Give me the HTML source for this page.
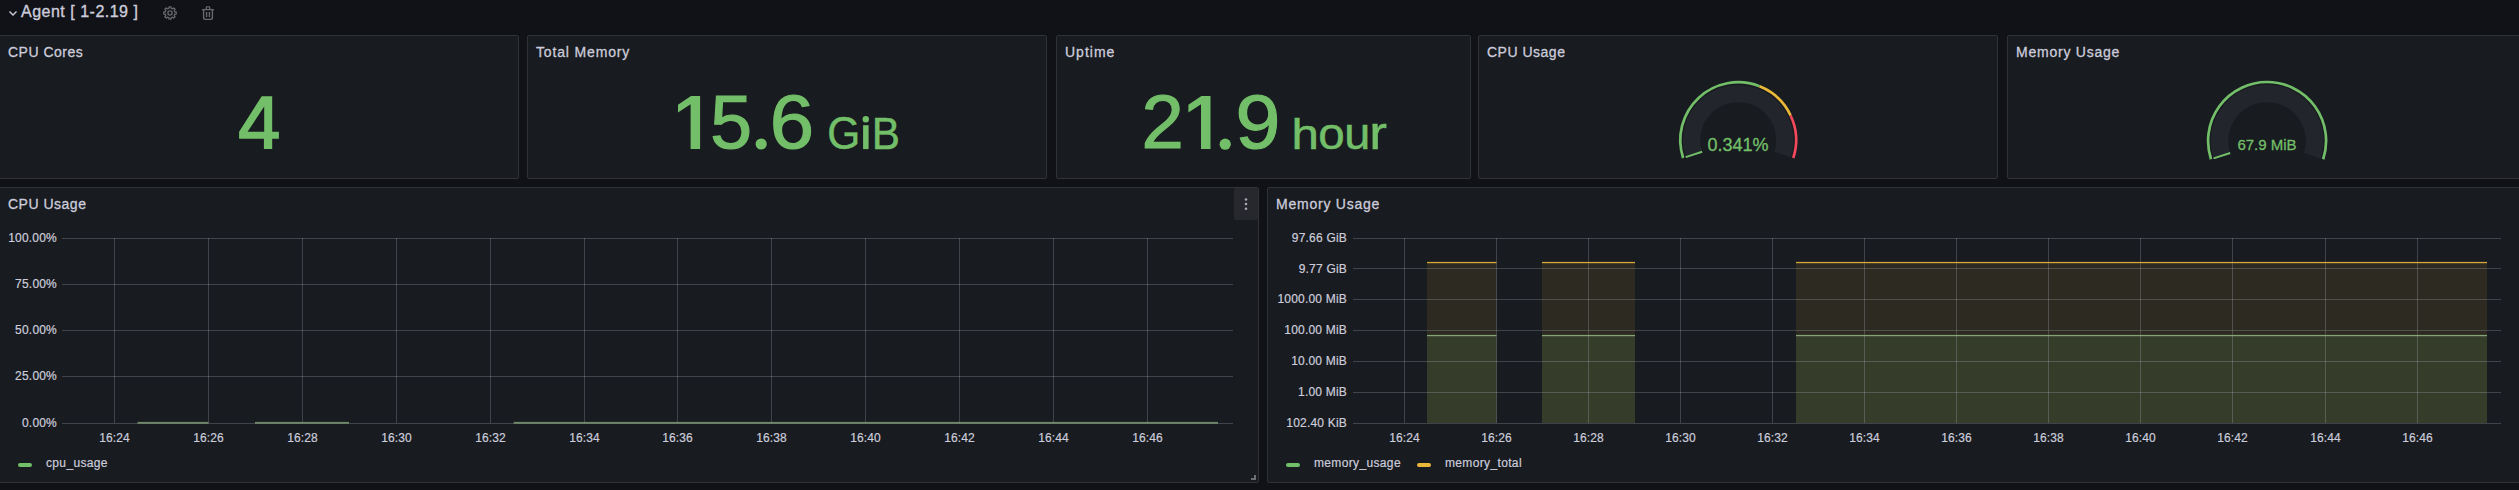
<!DOCTYPE html>
<html><head><meta charset="utf-8">
<style>
*{margin:0;padding:0;box-sizing:border-box}
html,body{width:2519px;height:490px;overflow:hidden;background:#111217;font-family:"Liberation Sans",sans-serif;color:#ccccdc}
.abs{position:absolute}
.panel{position:absolute;background:#181b1f;border:1px solid #303237;border-radius:2px}
.title{position:absolute;font-size:14px;line-height:14px;white-space:nowrap;color:#ccccdc;letter-spacing:0.5px;-webkit-text-stroke:0.3px #ccccdc}
.g{position:absolute;color:#73bf69;white-space:pre;transform-origin:0 0;-webkit-text-stroke:1.2px #73bf69}
.yl{position:absolute;font-size:12px;line-height:15px;text-align:right;white-space:nowrap;color:#ccccdc;letter-spacing:0.2px;-webkit-text-stroke:0.2px #ccccdc}
.xl{position:absolute;font-size:12px;line-height:15px;width:60px;text-align:center;white-space:nowrap;color:#ccccdc;letter-spacing:0.1px;-webkit-text-stroke:0.2px #ccccdc}
.leg{position:absolute;font-size:12px;line-height:15px;white-space:nowrap;color:#ccccdc;letter-spacing:0.35px;-webkit-text-stroke:0.2px #ccccdc}
.sw{position:absolute;width:14px;height:4px;border-radius:2px}
svg{position:absolute;left:0;top:0}
text{font-family:"Liberation Sans",sans-serif}
</style></head>
<body>
<div class="panel" style="left:-1px;top:35px;width:520px;height:144px"></div>
<div class="panel" style="left:527px;top:35px;width:520px;height:144px"></div>
<div class="panel" style="left:1056px;top:35px;width:415px;height:144px"></div>
<div class="panel" style="left:1478px;top:35px;width:520px;height:144px"></div>
<div class="panel" style="left:2007px;top:35px;width:520px;height:144px"></div>
<div class="panel" style="left:-1px;top:187px;width:1260px;height:296px"></div>
<div class="panel" style="left:1267px;top:187px;width:1260px;height:296px"></div>

<svg width="2519" height="490" viewBox="0 0 2519 490">
<path d="M9.5 11.5 L13 15 L16.5 11.5" fill="none" stroke="#ccccdc" stroke-width="1.4"/>
<path d="M700.1 96 L691 96 L678 104.8 L678 112.5 L690.6 104.3 L690.6 149 L700.1 149 Z" fill="#73bf69"/><path d="M1210.5 96 L1201.4 96 L1188.4 104.8 L1188.4 112.5 L1201.0 104.3 L1201.0 149 L1210.5 149 Z" fill="#73bf69"/><path d="M261.7 96.2 L272.2 96.2 L272.2 131.7 L278.9 131.7 L278.9 138.7 L272.2 138.7 L272.2 149.1 L263.9 149.1 L263.9 138.7 L239.1 138.7 L239.1 131.7 Z M247.6 131.7 L264.2 131.7 L264.2 106.4 Z" fill="#73bf69" fill-rule="evenodd"/><circle cx="761.15" cy="144" r="5.6" fill="#73bf69"/><circle cx="1225.2" cy="144.2" r="5.6" fill="#73bf69"/><circle cx="865.8" cy="119.3" r="3.2" fill="#73bf69"/><rect x="863.1" y="125.2" width="5.5" height="23.9" fill="#73bf69"/>
<text transform="translate(710.29 148.35) scale(0.9985 1)" font-size="75.27" fill="#73bf69" stroke="#73bf69" stroke-width="1.2">5</text>
<text transform="translate(769.82 148.35) scale(1.0582 1)" font-size="75.19" fill="#73bf69" stroke="#73bf69" stroke-width="1.2">6</text>
<text transform="translate(827.13 149.19) scale(0.9270 1)" font-size="45.80" fill="#73bf69" stroke="#73bf69" stroke-width="0.5">G</text>
<text transform="translate(871.86 148.85) scale(0.9432 1)" font-size="44.80" fill="#73bf69" stroke="#73bf69" stroke-width="0.5">B</text>
<text transform="translate(1141.40 148.40) scale(1.0103 1)" font-size="75.27" fill="#73bf69" stroke="#73bf69" stroke-width="1.2">2</text>
<text transform="translate(1235.57 148.35) scale(1.0725 1)" font-size="75.19" fill="#73bf69" stroke="#73bf69" stroke-width="1.2">9</text>
<text transform="translate(1291.40 148.85) scale(1.1601 1)" font-size="42.48" fill="#73bf69" stroke="#73bf69" stroke-width="0.5">h</text>
<text transform="translate(1318.33 149.20) scale(1.0641 1)" font-size="44.75" fill="#73bf69" stroke="#73bf69" stroke-width="0.5">o</text>
<text transform="translate(1344.21 149.20) scale(1.0487 1)" font-size="44.65" fill="#73bf69" stroke="#73bf69" stroke-width="0.5">u</text>
<text transform="translate(1369.36 148.85) scale(1.1577 1)" font-size="45.95" fill="#73bf69" stroke="#73bf69" stroke-width="0.5">r</text>
<path d="M174.34 11.20 L174.77 11.90 L176.22 12.01 L176.22 13.99 L174.77 14.10 L174.34 14.80 L174.34 14.80 L174.16 15.60 L175.10 16.70 L173.70 18.10 L172.60 17.16 L171.80 17.34 L171.80 17.34 L171.10 17.77 L170.99 19.22 L169.01 19.22 L168.90 17.77 L168.20 17.34 L168.20 17.34 L167.40 17.16 L166.30 18.10 L164.90 16.70 L165.84 15.60 L165.66 14.80 L165.66 14.80 L165.23 14.10 L163.78 13.99 L163.78 12.01 L165.23 11.90 L165.66 11.20 L165.66 11.20 L165.84 10.40 L164.90 9.30 L166.30 7.90 L167.40 8.84 L168.20 8.66 L168.20 8.66 L168.90 8.23 L169.01 6.78 L170.99 6.78 L171.10 8.23 L171.80 8.66 L171.80 8.66 L172.60 8.84 L173.70 7.90 L175.10 9.30 L174.16 10.40 L174.34 11.20 Z" fill="none" stroke="#66676d" stroke-width="1.3" stroke-linejoin="round"/><circle cx="170" cy="13" r="2.1" fill="none" stroke="#66676d" stroke-width="1.4"/><path d="M202 9.6 H214 M206.2 9.4 V8.2 Q206.2 6.6 208 6.6 Q209.8 6.6 209.8 8.2 V9.4 M203.6 9.6 V17.6 Q203.6 19.4 205.4 19.4 H210.6 Q212.4 19.4 212.4 17.6 V9.6 M206.6 12 V17 M209.4 12 V17" fill="none" stroke="#66676d" stroke-width="1.4"/>
<path d="M1685.70 157.16 A55.2 55.2 0 1 1 1790.70 157.16 L1774.25 151.81 A37.9 37.9 0 1 0 1702.15 151.81 Z" fill="#22252b"/><line x1="1702.15" y1="151.81" x2="1685.70" y2="157.16" stroke="#73bf69" stroke-width="2"/><path d="M1683.13 157.99 A57.9 57.9 0 0 1 1759.51 86.27" fill="none" stroke="#73bf69" stroke-width="2.7"/><path d="M1759.51 86.27 A57.9 57.9 0 0 1 1790.59 115.45" fill="none" stroke="#eab839" stroke-width="2.7"/><path d="M1790.59 115.45 A57.9 57.9 0 0 1 1793.27 157.99" fill="none" stroke="#f2495c" stroke-width="2.7"/>
<path d="M2213.56 158.40 A56.3 56.3 0 1 1 2320.64 158.40 L2304.00 152.99 A38.8 38.8 0 1 0 2230.20 152.99 Z" fill="#22252b"/><line x1="2230.20" y1="152.99" x2="2213.56" y2="158.40" stroke="#73bf69" stroke-width="2"/><path d="M2210.99 159.23 A59 59 0 1 1 2323.21 159.23" fill="none" stroke="#73bf69" stroke-width="2.7"/>
<rect x="62" y="238" width="1171" height="1" fill="rgba(204,204,220,0.23)"/><rect x="62" y="284" width="1171" height="1" fill="rgba(204,204,220,0.23)"/><rect x="62" y="330" width="1171" height="1" fill="rgba(204,204,220,0.23)"/><rect x="62" y="376" width="1171" height="1" fill="rgba(204,204,220,0.23)"/><rect x="62" y="423" width="1171" height="1" fill="rgba(204,204,220,0.23)"/><rect x="114" y="238" width="1" height="185" fill="rgba(204,204,220,0.23)"/><rect x="208" y="238" width="1" height="185" fill="rgba(204,204,220,0.23)"/><rect x="302" y="238" width="1" height="185" fill="rgba(204,204,220,0.23)"/><rect x="396" y="238" width="1" height="185" fill="rgba(204,204,220,0.23)"/><rect x="490" y="238" width="1" height="185" fill="rgba(204,204,220,0.23)"/><rect x="584" y="238" width="1" height="185" fill="rgba(204,204,220,0.23)"/><rect x="677" y="238" width="1" height="185" fill="rgba(204,204,220,0.23)"/><rect x="771" y="238" width="1" height="185" fill="rgba(204,204,220,0.23)"/><rect x="865" y="238" width="1" height="185" fill="rgba(204,204,220,0.23)"/><rect x="959" y="238" width="1" height="185" fill="rgba(204,204,220,0.23)"/><rect x="1053" y="238" width="1" height="185" fill="rgba(204,204,220,0.23)"/><rect x="1147" y="238" width="1" height="185" fill="rgba(204,204,220,0.23)"/><rect x="137.5" y="421.9" width="71.0" height="1.8" fill="#93b886" fill-opacity="0.7"/><rect x="255" y="421.9" width="94.0" height="1.8" fill="#93b886" fill-opacity="0.7"/><rect x="513.7" y="421.9" width="704.3" height="1.8" fill="#93b886" fill-opacity="0.7"/>
<rect x="1427" y="262.5" width="69.5" height="160.5" fill="#eab839" fill-opacity="0.1"/><rect x="1427" y="335.5" width="69.5" height="87.5" fill="#73bf69" fill-opacity="0.12"/><rect x="1542" y="262.5" width="93.0" height="160.5" fill="#eab839" fill-opacity="0.1"/><rect x="1542" y="335.5" width="93.0" height="87.5" fill="#73bf69" fill-opacity="0.12"/><rect x="1796" y="262.5" width="691.0" height="160.5" fill="#eab839" fill-opacity="0.1"/><rect x="1796" y="335.5" width="691.0" height="87.5" fill="#73bf69" fill-opacity="0.12"/><rect x="1353" y="238" width="1148" height="1" fill="rgba(204,204,220,0.23)"/><rect x="1353" y="268" width="1148" height="1" fill="rgba(204,204,220,0.23)"/><rect x="1353" y="299" width="1148" height="1" fill="rgba(204,204,220,0.23)"/><rect x="1353" y="330" width="1148" height="1" fill="rgba(204,204,220,0.23)"/><rect x="1353" y="361" width="1148" height="1" fill="rgba(204,204,220,0.23)"/><rect x="1353" y="392" width="1148" height="1" fill="rgba(204,204,220,0.23)"/><rect x="1353" y="423" width="1148" height="1" fill="rgba(204,204,220,0.23)"/><rect x="1404" y="238" width="1" height="185" fill="rgba(204,204,220,0.23)"/><rect x="1496" y="238" width="1" height="185" fill="rgba(204,204,220,0.23)"/><rect x="1588" y="238" width="1" height="185" fill="rgba(204,204,220,0.23)"/><rect x="1680" y="238" width="1" height="185" fill="rgba(204,204,220,0.23)"/><rect x="1772" y="238" width="1" height="185" fill="rgba(204,204,220,0.23)"/><rect x="1864" y="238" width="1" height="185" fill="rgba(204,204,220,0.23)"/><rect x="1956" y="238" width="1" height="185" fill="rgba(204,204,220,0.23)"/><rect x="2048" y="238" width="1" height="185" fill="rgba(204,204,220,0.23)"/><rect x="2140" y="238" width="1" height="185" fill="rgba(204,204,220,0.23)"/><rect x="2232" y="238" width="1" height="185" fill="rgba(204,204,220,0.23)"/><rect x="2325" y="238" width="1" height="185" fill="rgba(204,204,220,0.23)"/><rect x="2417" y="238" width="1" height="185" fill="rgba(204,204,220,0.23)"/><rect x="1427" y="261.9" width="69.5" height="1.3" fill="#eab839" fill-opacity="0.9"/><rect x="1427" y="334.9" width="69.5" height="1.3" fill="#8fb07f" fill-opacity="0.9"/><rect x="1542" y="261.9" width="93.0" height="1.3" fill="#eab839" fill-opacity="0.9"/><rect x="1542" y="334.9" width="93.0" height="1.3" fill="#8fb07f" fill-opacity="0.9"/><rect x="1796" y="261.9" width="691.0" height="1.3" fill="#eab839" fill-opacity="0.9"/><rect x="1796" y="334.9" width="691.0" height="1.3" fill="#8fb07f" fill-opacity="0.9"/>
<rect x="1234" y="188" width="24" height="32" rx="2" fill="#26282d"/>
<circle cx="1246" cy="199.5" r="1.3" fill="#a8a8b0"/>
<circle cx="1246" cy="204" r="1.3" fill="#a8a8b0"/>
<circle cx="1246" cy="208.7" r="1.3" fill="#a8a8b0"/>
<path d="M1251 480 H1256 V475 H1254 V478 H1251 Z" fill="#6e6f74"/>
</svg>
<div class="abs" style="left:21px;top:4px;font-size:16px;line-height:16px;white-space:nowrap;letter-spacing:0.5px;-webkit-text-stroke:0.35px #ccccdc">Agent [ 1-2.19 ]</div>

<div class="title" style="left:8px;top:45px">CPU Cores</div>
<div class="title" style="left:536px;top:45px;letter-spacing:0.85px">Total Memory</div>
<div class="title" style="left:1065px;top:45px;letter-spacing:1px">Uptime</div>
<div class="title" style="left:1487px;top:45px">CPU Usage</div>
<div class="title" style="left:2016px;top:45px;letter-spacing:0.77px">Memory Usage</div>
<div class="title" style="left:8px;top:197px">CPU Usage</div>
<div class="title" style="left:1276px;top:197px;letter-spacing:0.77px">Memory Usage</div>

<div class="abs" style="left:1688px;top:136px;width:100px;text-align:center;font-size:18px;line-height:18px;color:#73bf69;-webkit-text-stroke:0.3px #73bf69">0.341%</div>
<div class="abs" style="left:2217px;top:137px;width:100px;text-align:center;font-size:15px;line-height:15px;color:#73bf69;-webkit-text-stroke:0.3px #73bf69">67.9 MiB</div>

<div class="yl" style="left:0;width:57px;top:230.50px">100.00%</div><div class="yl" style="left:0;width:57px;top:276.75px">75.00%</div><div class="yl" style="left:0;width:57px;top:323.00px">50.00%</div><div class="yl" style="left:0;width:57px;top:369.25px">25.00%</div><div class="yl" style="left:0;width:57px;top:415.50px">0.00%</div><div class="xl" style="left:84.5px;top:431px">16:24</div><div class="xl" style="left:178.5px;top:431px">16:26</div><div class="xl" style="left:272.5px;top:431px">16:28</div><div class="xl" style="left:366.5px;top:431px">16:30</div><div class="xl" style="left:460.5px;top:431px">16:32</div><div class="xl" style="left:554.5px;top:431px">16:34</div><div class="xl" style="left:647.5px;top:431px">16:36</div><div class="xl" style="left:741.5px;top:431px">16:38</div><div class="xl" style="left:835.5px;top:431px">16:40</div><div class="xl" style="left:929.5px;top:431px">16:42</div><div class="xl" style="left:1023.5px;top:431px">16:44</div><div class="xl" style="left:1117.5px;top:431px">16:46</div>
<div class="yl" style="left:1267px;width:80px;top:230.80px">97.66 GiB</div><div class="yl" style="left:1267px;width:80px;top:261.63px">9.77 GiB</div><div class="yl" style="left:1267px;width:80px;top:292.47px">1000.00 MiB</div><div class="yl" style="left:1267px;width:80px;top:323.30px">100.00 MiB</div><div class="yl" style="left:1267px;width:80px;top:354.13px">10.00 MiB</div><div class="yl" style="left:1267px;width:80px;top:384.97px">1.00 MiB</div><div class="yl" style="left:1267px;width:80px;top:415.80px">102.40 KiB</div><div class="xl" style="left:1374.5px;top:431px">16:24</div><div class="xl" style="left:1466.5px;top:431px">16:26</div><div class="xl" style="left:1558.5px;top:431px">16:28</div><div class="xl" style="left:1650.5px;top:431px">16:30</div><div class="xl" style="left:1742.5px;top:431px">16:32</div><div class="xl" style="left:1834.5px;top:431px">16:34</div><div class="xl" style="left:1926.5px;top:431px">16:36</div><div class="xl" style="left:2018.5px;top:431px">16:38</div><div class="xl" style="left:2110.5px;top:431px">16:40</div><div class="xl" style="left:2202.5px;top:431px">16:42</div><div class="xl" style="left:2295.5px;top:431px">16:44</div><div class="xl" style="left:2387.5px;top:431px">16:46</div>
<div class="sw" style="left:18px;top:463px;background:#73bf69"></div>
<div class="leg" style="left:46px;top:456px">cpu_usage</div>
<div class="sw" style="left:1286px;top:463px;background:#73bf69"></div>
<div class="leg" style="left:1314px;top:456px">memory_usage</div>
<div class="sw" style="left:1417px;top:463px;background:#eab839"></div>
<div class="leg" style="left:1445px;top:456px">memory_total</div>
</body></html>
